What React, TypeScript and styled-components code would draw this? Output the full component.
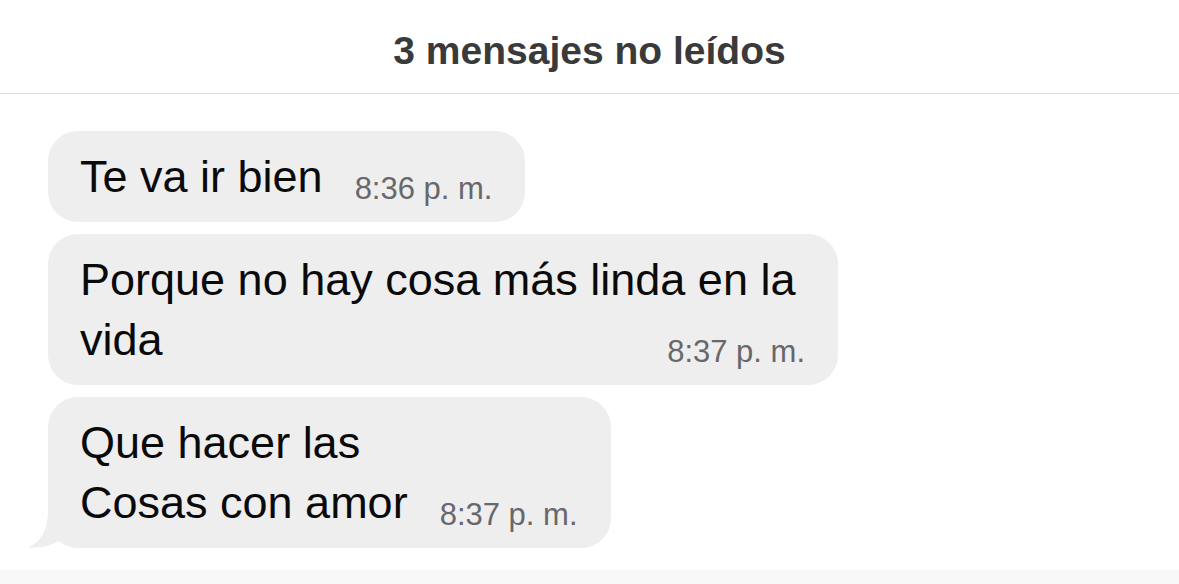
import React from "react";
import styled, { createGlobalStyle } from "styled-components";

const GlobalStyle = createGlobalStyle`
  html, body {
    margin: 0;
    padding: 0;
    background: #ffffff;
  }
  body {
    font-family: "Liberation Sans", Arial, sans-serif;
    -webkit-font-smoothing: antialiased;
  }
`;

const Screen = styled.div`
  width: 1179px;
  height: 584px;
  display: flex;
  flex-direction: column;
  background: #ffffff;
  overflow: hidden;
`;

const Header = styled.header`
  height: 94px;
  box-sizing: border-box;
  padding-top: 8px;
  line-height: 85px;
  text-align: center;
  font-size: 39px;
  font-weight: 700;
  color: #3a3a3a;
  border-bottom: 1px solid #dcdcdc;
  flex: 0 0 auto;
`;

const List = styled.main`
  height: 476px;
  box-sizing: border-box;
  padding: 37px 0 0 48px;
  display: flex;
  flex-direction: column;
  align-items: flex-start;
  gap: 12px;
  flex: 0 0 auto;
`;

const Footer = styled.div`
  flex: 1 1 auto;
  background: #f8f8f8;
`;

const Bubble = styled.div`
  position: relative;
  max-width: 790px;
  box-sizing: border-box;
  padding: 16px 32px 15px 32px;
  background: #eeeeee;
  border-radius: 30px;
`;

const Text = styled.div`
  font-size: 45px;
  line-height: 60px;
  color: #0a0a0a;
`;

const Time = styled.span`
  float: right;
  margin: 24px 1px 0 32px;
  line-height: 36px;
  font-size: 31px;
  color: #67676c;
  white-space: nowrap;
`;

const Tail = styled.svg`
  position: absolute;
  left: -21px;
  bottom: 0;
  width: 40px;
  height: 40px;
`;

type Msg = { lines: string[]; time: string; tail?: boolean };

const messages: Msg[] = [
  { lines: ["Te va ir bien"], time: "8:36 p. m." },
  { lines: ["Porque no hay cosa más linda en la vida"], time: "8:37 p. m." },
  { lines: ["Que hacer las", "Cosas con amor"], time: "8:37 p. m.", tail: true },
];

export default function App() {
  return (
    <>
      <GlobalStyle />
      <Screen>
        <Header>3 mensajes no leídos</Header>
        <List>
          {messages.map((m, i) => (
            <Bubble key={i}>
              <Text>
                {m.lines.map((l, j) => (
                  <React.Fragment key={j}>
                    {j > 0 && <br />}
                    {l}
                  </React.Fragment>
                ))}
                <Time>{m.time}</Time>
              </Text>
              {m.tail && (
                <Tail viewBox="0 0 40 40">
                  <path
                    d="M21 0 C21 22 15 32 2 39.5 C14 40.5 24 37 32 33 L32 0 Z"
                    fill="#eeeeee"
                  />
                </Tail>
              )}
            </Bubble>
          ))}
        </List>
        <Footer />
      </Screen>
    </>
  );
}
